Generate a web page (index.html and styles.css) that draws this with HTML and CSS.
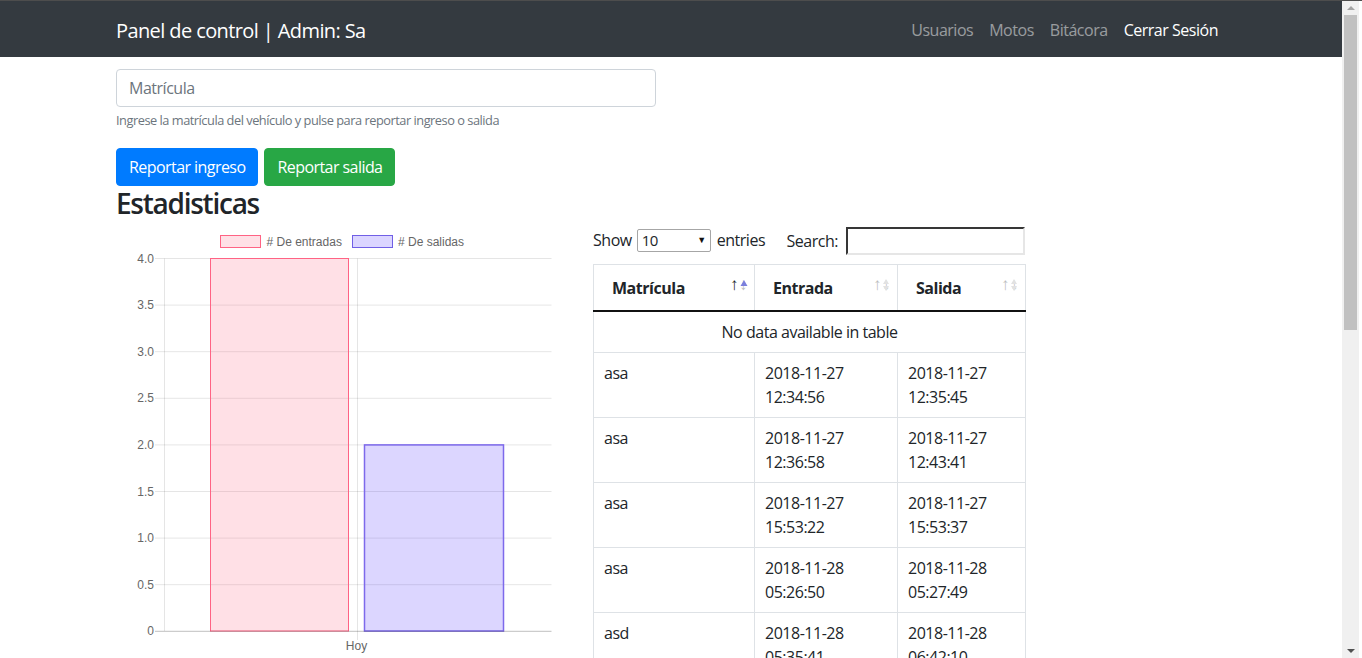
FILE: index.html
```html
<!DOCTYPE html>
<html lang="es">
<head>
<meta charset="utf-8">
<title>Panel de control</title>
<link rel="stylesheet" href="styles.css">
</head>
<body>
<div class="page">
  <nav class="navbar">
    <div class="container nav-inner">
      <span class="brand">Panel de control | Admin: Sa</span>
      <ul class="nav">
        <li><a class="nav-link">Usuarios</a></li>
        <li><a class="nav-link">Motos</a></li>
        <li><a class="nav-link">Bitácora</a></li>
        <li><a class="nav-link active">Cerrar Sesión</a></li>
      </ul>
    </div>
  </nav>

  <main class="container main">
    <div class="form-group">
      <input class="form-control" type="text" placeholder="Matrícula">
      <small class="form-text">Ingrese la matrícula del vehículo y pulse para reportar ingreso o salida</small>
    </div>
    <div class="buttons">
      <button class="btn btn-primary">Reportar ingreso</button>
      <button class="btn btn-success">Reportar salida</button>
    </div>
    <h3 class="title">Estadisticas</h3>

    <div class="stats">
      <div class="chart">
        <svg width="440" height="430" viewBox="0 0 440 430">
          <g class="legend">
            <rect x="104.5" y="7.5" width="40" height="12" fill="rgba(255,99,132,0.2)" stroke="rgba(255,99,132,1)" stroke-width="1"/>
            <text x="150.5" y="17.5"># De entradas</text>
            <rect x="236.5" y="7.5" width="40" height="12" fill="rgba(54,22,255,0.18)" stroke="rgba(112,95,230,1)" stroke-width="1"/>
            <text x="282" y="17.5"># De salidas</text>
          </g>
          <g class="grid" stroke="rgba(0,0,0,0.1)" stroke-width="1">
            <line x1="39" y1="30.5" x2="435.5" y2="30.5"/>
            <line x1="39" y1="77.1" x2="435.5" y2="77.1"/>
            <line x1="39" y1="123.7" x2="435.5" y2="123.7"/>
            <line x1="39" y1="170.3" x2="435.5" y2="170.3"/>
            <line x1="39" y1="216.9" x2="435.5" y2="216.9"/>
            <line x1="39" y1="263.5" x2="435.5" y2="263.5"/>
            <line x1="39" y1="310.1" x2="435.5" y2="310.1"/>
            <line x1="39" y1="356.7" x2="435.5" y2="356.7"/>
            <line x1="48.5" y1="30.5" x2="48.5" y2="403"/>
            <line x1="241.5" y1="30.5" x2="241.5" y2="412"/>
          </g>
          <rect x="94.5" y="30.5" width="138" height="372.5" fill="rgba(255,99,132,0.2)" stroke="rgba(255,99,132,1)" stroke-width="1"/>
          <rect x="248.5" y="216.9" width="139" height="186.1" fill="rgba(80,50,255,0.2)" stroke="rgba(125,105,235,1)" stroke-width="1.5"/>
          <line x1="39" y1="403.3" x2="435.5" y2="403.3" stroke="rgba(0,0,0,0.25)" stroke-width="1"/>
          <g class="ticks" text-anchor="end">
            <text x="38" y="34.5">4.0</text>
            <text x="38" y="81.1">3.5</text>
            <text x="38" y="127.7">3.0</text>
            <text x="38" y="174.3">2.5</text>
            <text x="38" y="220.9">2.0</text>
            <text x="38" y="267.5">1.5</text>
            <text x="38" y="314.1">1.0</text>
            <text x="38" y="360.7">0.5</text>
            <text x="38" y="407.3">0</text>
          </g>
          <text class="xlabel" x="240.5" y="422" text-anchor="middle">Hoy</text>
        </svg>
      </div>

      <div class="dt-wrapper">
        <div class="dt-controls">
          <label class="dt-length">Show
            <span class="select"><span>10</span><span class="caret">▼</span></span>
            entries</label>
          <label class="dt-search">Search: <input class="search-input" type="search"></label>
        </div>
        <table class="dt">
          <colgroup>
            <col class="c1"><col class="c2"><col class="c3">
          </colgroup>
          <thead>
            <tr>
              <th class="sort-asc">Matrícula
                <span class="sorter"><span class="up">↑</span><span class="down">↓</span>
                  <svg class="tri" width="8" height="8" viewBox="0 0 8 8"><path d="M0.5 7 L4 1 L7.5 7 Z" fill="#7b7fdc"/></svg></span></th>
              <th>Entrada
                <span class="sorter"><span class="up">↑</span><span class="down">↓</span>
                  <svg class="tri" width="8" height="14" viewBox="0 0 8 14"><path d="M1 6 L4 1 L7 6 Z M1 8 L4 13 L7 8 Z" fill="#e2e2e2"/></svg></span></th>
              <th>Salida
                <span class="sorter"><span class="up">↑</span><span class="down">↓</span>
                  <svg class="tri" width="8" height="14" viewBox="0 0 8 14"><path d="M1 6 L4 1 L7 6 Z M1 8 L4 13 L7 8 Z" fill="#e2e2e2"/></svg></span></th>
            </tr>
          </thead>
          <tbody>
            <tr><td colspan="3" class="empty">No data available in table</td></tr>
            <tr><td>asa</td><td>2018-11-27 12:34:56</td><td>2018-11-27 12:35:45</td></tr>
            <tr><td>asa</td><td>2018-11-27 12:36:58</td><td>2018-11-27 12:43:41</td></tr>
            <tr><td>asa</td><td>2018-11-27 15:53:22</td><td>2018-11-27 15:53:37</td></tr>
            <tr><td>asa</td><td>2018-11-28 05:26:50</td><td>2018-11-28 05:27:49</td></tr>
            <tr><td>asd</td><td>2018-11-28 05:35:41</td><td>2018-11-28 06:42:10</td></tr>
            <tr><td>asd</td><td>2018-11-28 06:50:12</td><td>2018-11-28 07:01:33</td></tr>
          </tbody>
        </table>
      </div>
    </div>
  </main>
</div>
<div class="scrollbar">
  <div class="sb-arrow sb-up"></div>
  <div class="sb-track"><div class="sb-thumb"></div></div>
  <div class="sb-arrow sb-down"></div>
</div>
<div class="edge"></div>
</body>
</html>
```

FILE: styles.css
```css
* { box-sizing: border-box; }

html, body {
  margin: 0;
  height: 658px;
  overflow: hidden;
}

body {
  display: flex;
  border-top: 1px solid #4d4d4d;
  font-family: "Segoe UI", "Open Sans", sans-serif;
  font-size: 16px;
  line-height: 1.5;
  color: #212529;
  background: #fff;
}

.page {
  flex: 1;
  min-width: 0;
  height: 657px;
  overflow: hidden;
  letter-spacing: -0.03em;
}

.container {
  width: 1140px;
  margin: 0 auto;
  padding: 0 15px;
}

/* navbar */
.navbar {
  background: #343a40;
  height: 56px;
}
.nav-inner {
  display: flex;
  align-items: center;
  justify-content: space-between;
  height: 56px;
}
.brand {
  color: #fff;
  font-size: 20px;
  line-height: 30px;
  letter-spacing: -0.03em;
  margin-top: 3px;
}
.nav {
  display: flex;
  list-style: none;
  margin: 1px 0 0;
  padding: 0;
}
.nav-link {
  display: block;
  padding: 8px 8px;
  color: rgba(255,255,255,0.5);
  line-height: 24px;
}
.nav-link.active { color: #fff; }

/* form */
.main { padding-top: 12px; }
.form-group {
  width: 540px;
  margin-bottom: 16px;
}
.form-control {
  display: block;
  width: 540px;
  height: 38px;
  padding: 6px 12px;
  font: inherit;
  font-size: 16px;
  letter-spacing: -0.03em;
  color: #495057;
  border: 1px solid #ced4da;
  border-radius: 4px;
  background: #fff;
}
.form-control::placeholder { color: #6c757d; }
.form-text {
  display: block;
  margin-top: 4px;
  font-size: 12.8px;
  line-height: 19px;
  color: #6c757d;
}

.buttons {
  display: flex;
  gap: 6px;
  padding-top: 2px;
}
.btn {
  font: inherit;
  font-size: 16px;
  letter-spacing: -0.035em;
  line-height: 24px;
  padding: 6px 12px;
  border: 1px solid transparent;
  border-radius: 4px;
  color: #fff;
}
.btn-primary { background: #007bff; border-color: #007bff; }
.btn-success { background: #28a745; border-color: #28a745; }

.title {
  margin: 0;
  font-size: 28px;
  font-weight: 600;
  line-height: 34px;
  letter-spacing: -0.045em;
}

/* stats */
.stats {
  display: flex;
  gap: 37px;
  margin-top: 8px;
}
.chart {
  width: 440px;
  flex: none;
}
.chart svg { display: block; }
.chart text {
  font-family: "Liberation Sans", Arial, sans-serif;
  letter-spacing: 0;
  font-size: 12px;
  fill: #666;
}

.dt-wrapper {
  width: 432px;
  flex: none;
  margin-top: -3px;
}
.dt-controls {
  display: flex;
  align-items: center;
  justify-content: space-between;
  height: 30px;
  margin-bottom: 9px;
}
.dt-length, .dt-search {
  display: flex;
  align-items: center;
  gap: 5px;
}
.dt-search { gap: 8px; margin-top: 2px; }
.select {
  display: inline-flex;
  align-items: center;
  justify-content: space-between;
  width: 74px;
  height: 23px;
  padding: 0 4px 0 4px;
  border: 1px solid #a6a6a6;
  border-radius: 2px;
  font-size: 15px;
  margin-right: 1px;
}
.caret { font-size: 9px; color: #111; }
.search-input {
  width: 179px;
  height: 28px;
  border: 2px inset #e6e6e6;
  border-top-color: #8a8a8a;
  border-left-color: #8a8a8a;
  padding: 0 4px;
  font: inherit;
}

.dt {
  width: 432px;
  table-layout: fixed;
  border-collapse: collapse;
  border: 1px solid #dee2e6;
}
.c1 { width: 161px; }
.c2 { width: 143px; }
.c3 { width: 128px; }

.dt th {
  position: relative;
  text-align: left;
  font-weight: bold;
  padding: 11px 18px 10px;
  line-height: 24px;
  border: 1px solid #dee2e6;
  border-bottom: 2px solid #111;
}
.dt td {
  padding: 8px 10px;
  line-height: 24px;
  border: 1px solid #dee2e6;
  vertical-align: top;
}
.dt td.empty { text-align: center; }

.sorter {
  position: absolute;
  right: 6px;
  top: 11px;
  display: flex;
  align-items: flex-start;
  font-weight: normal;
  font-size: 17px;
  line-height: 16px;
  letter-spacing: 0;
}
.sorter .up { color: #212529; opacity: 0.3; width: 9px; }
.sorter .down { color: #212529; opacity: 0.3; width: 9px; }
.sort-asc .sorter .up { opacity: 1; }
.sorter .tri {
  position: absolute;
  right: 1px;
  top: 2px;
}
.sort-asc .sorter .tri { top: 3px; right: 0; }

/* fake window scrollbar */
.scrollbar {
  width: 17px;
  height: 657px;
  flex: none;
  background: #f0f0f0;
  display: flex;
  flex-direction: column;
}
.sb-arrow {
  height: 14px;
  display: flex;
  justify-content: center;
  align-items: center;
}
.sb-up::before {
  content: "";
  border-left: 4px solid transparent;
  border-right: 4px solid transparent;
  border-bottom: 4px solid #a3a3a3;
}
.sb-down::before {
  content: "";
  border-left: 4px solid transparent;
  border-right: 4px solid transparent;
  border-top: 4px solid #505050;
}
.sb-track {
  flex: 1;
  padding: 0 2px;
}
.sb-thumb {
  height: 315px;
  background: #c1c1c1;
}
.edge {
  width: 3px;
  flex: none;
  background: #fff;
}
```
